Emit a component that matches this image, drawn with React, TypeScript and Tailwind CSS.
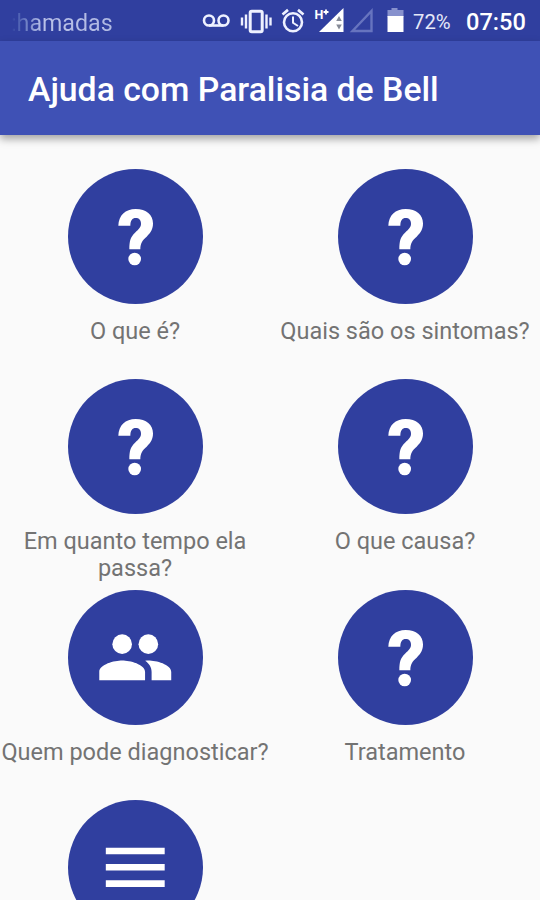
import type { ReactNode } from "react";

const QuestionIcon = () => (
  <svg viewBox="24 27 405 405" className="size-full" fill="currentColor">
    <path d="M175 197C176 166 196 147 227 147C259 147 279 164 279 190C279 208 272 218 260 230C248 241 241 248 241 268H208C208 241 212 231 225 218C237 206 243 201 243 191C243 180 237 174 227 174C217 174 211 182 211 197Z" />
    <circle cx="224" cy="297" r="19" />
  </svg>
);

const PeopleIcon = () => (
  <svg viewBox="0 0 24 24" className="size-[78.5px]" fill="currentColor">
    <circle cx="16" cy="8" r="3" />
    <circle cx="8" cy="8" r="3" />
    <path d="M8 13c-2.33 0-7 1.17-7 3.5V19h14v-2.5c0-2.33-4.67-3.5-7-3.5zm8 0c-.29 0-.62.02-.97.05 1.16.84 1.97 1.97 1.97 3.45V19h6v-2.5c0-2.33-4.67-3.5-7-3.5z" />
  </svg>
);

const MenuIcon = () => (
  <svg viewBox="0 0 24 24" className="size-[78.5px]" fill="currentColor">
    <path d="M3 18h18v-2H3v2zm0-5h18v-2H3v2zm0-7v2h18V6H3z" />
  </svg>
);

interface ITopic {
  title: string;
  icon: ReactNode;
}

const topics: ITopic[] = [
  { title: "O que é?", icon: <QuestionIcon /> },
  { title: "Quais são os sintomas?", icon: <QuestionIcon /> },
  { title: "Em quanto tempo ela passa?", icon: <QuestionIcon /> },
  { title: "O que causa?", icon: <QuestionIcon /> },
  { title: "Quem pode diagnosticar?", icon: <PeopleIcon /> },
  { title: "Tratamento", icon: <QuestionIcon /> },
  { title: "", icon: <MenuIcon /> },
];

const StatusIcons = () => (
  <svg viewBox="200 0 210 41" className="h-[41px] w-[210px] shrink-0" fill="none" stroke="#eef1ff">
    {/* voicemail */}
    <g strokeWidth="2.6">
      <circle cx="209" cy="20.5" r="5" />
      <circle cx="223.5" cy="20.5" r="5" />
      <path d="M209 25.5h14.5" />
    </g>
    {/* vibration */}
    <rect x="250.2" y="11.2" width="12" height="20.5" rx="1.5" strokeWidth="3" />
    <path d="M246 14.5v14M266.5 14.5v14M242 17.5v8M270.5 17.5v8" strokeWidth="2.4" />
    {/* alarm */}
    <circle cx="293" cy="22.3" r="9" strokeWidth="2.6" />
    <path d="M293 16.5v6.3l5 3.2" strokeWidth="2" />
    <path d="M282.5 14.5l5.5-4.6M303.5 14.5l-5.5-4.6" strokeWidth="2.7" />
    {/* mobile signal */}
    <path d="M343.5 8v24H319z" fill="#fff" stroke="none" />
    <path d="M339 16l2.8 5h-5.6zM339 29.5l2.8-5h-5.6z" fill="#858a96" stroke="none" />
    <text x="314.5" y="18.5" fill="#fff" stroke="none" className="font-['Roboto'] text-[12.5px] font-bold">
      H
    </text>
    <path d="M323.5 12h5M326 9.5v5" stroke="#fff" strokeWidth="1.8" />
    <path d="M371.5 11v20H352.5z" stroke="#6774bf" strokeWidth="2.4" />
    {/* battery */}
    <path d="M387.5 10h4V8h6v2h6v7h-16z" fill="#8791cd" stroke="none" />
    <path d="M387.5 16h16v16h-16z" fill="#fff" stroke="none" />
  </svg>
);

const StatusBar = () => (
  <div className="flex h-[41px] shrink-0 items-center bg-[#303f9f] text-white">
    <div className="w-[200px] pl-[11px]">
      <span className="inline-block bg-linear-to-r from-[#303f9f] via-[#b9c1e8] via-30% to-[#b0b9e2] bg-clip-text pt-[4px] text-[23.2px] leading-10 text-transparent">
        :hamadas
      </span>
    </div>
    <StatusIcons />
    <span className="ml-[3px] w-[48px] pt-[2px] text-[20.25px] leading-10 text-[#e5e8f8]">72%</span>
    <span className="ml-[5px] pt-[3px] text-[23.6px] leading-10 font-medium">07:50</span>
  </div>
);

const Topic = ({ title, icon }: ITopic) => (
  <div className="flex h-[210.3px] flex-col items-center">
    <div className="flex size-[135px] shrink-0 items-center justify-center rounded-full bg-[#303f9f] text-white">{icon}</div>
    <p className="mt-[14px] text-center text-[23.5px] leading-[27px] text-[#737373]">{title}</p>
  </div>
);

export default function App() {
  return (
    <div className="flex h-[900px] w-[540px] flex-col overflow-hidden bg-[#fafafa] font-['Roboto',sans-serif]">
      <StatusBar />
      <header className="flex h-[94px] shrink-0 items-center bg-[#3f51b5] pt-[4px] pl-[28px] shadow-[0_4px_8px_rgba(0,0,0,0.35)]">
        <h1 className="text-[33.75px] leading-10 font-medium text-white">Ajuda com Paralisia de Bell</h1>
      </header>
      <main className="grid shrink-0 grid-cols-2 pt-[34px]">
        {topics.map((topic, index) => (
          <Topic key={index} {...topic} />
        ))}
      </main>
    </div>
  );
}
